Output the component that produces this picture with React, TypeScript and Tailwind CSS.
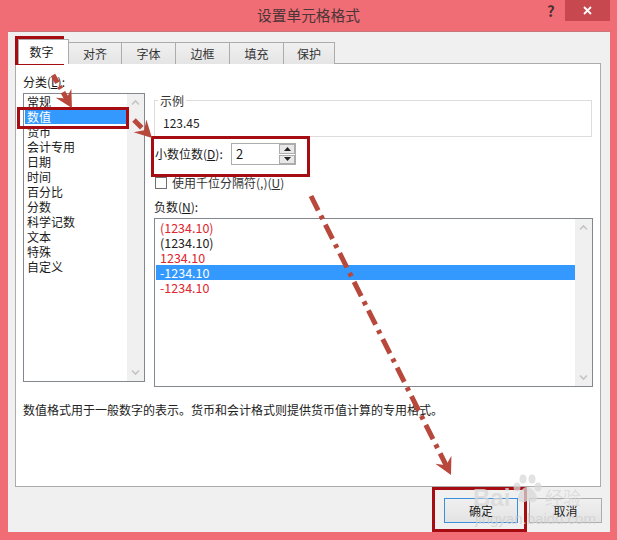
const font = { fontFamily: '"Noto Sans CJK SC", "Open Sans", sans-serif' };

const categories = ['常规', '数值', '货币', '会计专用', '日期', '时间', '百分比', '分数', '科学记数', '文本', '特殊', '自定义'];

const negatives = [
  { label: '(1234.10)', color: 'text-[#e0262e]' },
  { label: '(1234.10)', color: 'text-[#222222]' },
  { label: '1234.10', color: 'text-[#e0262e]' },
  { label: '-1234.10', color: 'text-white', selected: true },
  { label: '-1234.10', color: 'text-[#e0262e]' },
];

const tabs = [
  { label: '对齐', w: 'w-[54px]' },
  { label: '字体', w: 'w-[55px]' },
  { label: '边框', w: 'w-[55px]' },
  { label: '填充', w: 'w-[55px]' },
  { label: '保护', w: 'w-[52px]' },
];

function ScrollTrack() {
  return (
    <div className="w-[17px] shrink-0 bg-[#f0f0f0] flex flex-col justify-between items-center py-[5px]">
      <svg width="9" height="7" viewBox="0 0 9 7" fill="none" stroke="#c4c4c4" strokeWidth="1.6"><path d="M1 5.5 L4.5 2 L8 5.5" /></svg>
      <svg width="9" height="7" viewBox="0 0 9 7" fill="none" stroke="#c4c4c4" strokeWidth="1.6"><path d="M1 1.5 L4.5 5 L8 1.5" /></svg>
    </div>
  );
}

function Arrow({ x1, y1, x2, y2, dash }: { x1: number; y1: number; x2: number; y2: number; dash: string }) {
  const a = Math.atan2(y2 - y1, x2 - x1);
  const len = Math.hypot(x2 - x1, y2 - y1);
  const deg = (a * 180) / Math.PI;
  return (
    <g transform={`translate(${x1} ${y1}) rotate(${deg})`}>
      <line x1="0" y1="0" x2={len - 10} y2="0" stroke="#b8483c" strokeWidth="5" strokeDasharray={dash} />
      <path d={`M${len} 0 L${len - 17} -9 L${len - 11} 0 L${len - 17} 9 Z`} fill="#b8483c" />
    </g>
  );
}

export default function App() {
  return (
    <div className="relative w-[617px] h-[540px] overflow-hidden bg-[#f06d75] text-[12px] text-[#1a1a1a]" style={font}>
      {/* title bar */}
      <div className="relative h-[31px] flex items-center justify-center">
        <span className="text-[14.7px] leading-none text-[#4a3538] mt-[-1px]">设置单元格格式</span>
        <span className="absolute left-[547px] top-[2px] text-[15px] font-bold leading-[18px] text-[#4a2f33]">?</span>
        <div className="absolute left-[565px] top-0 w-[45px] h-[21px] bg-[#c7484f] flex items-center justify-center">
          <svg width="9" height="9" viewBox="0 0 9 9" stroke="#ffffff" strokeWidth="1.8"><path d="M1 1 L8 8 M8 1 L1 8" /></svg>
        </div>
      </div>

      {/* dialog body */}
      <div className="ml-[8px] w-[602px] h-[501px] bg-[#f0f0f0] border-t border-[#c9767b] pl-[7px] pr-[9px] pt-[9px] flex flex-col">
        <div className="flex h-[23px] items-end pl-[3px] relative z-10 shrink-0">
          <div className="w-[51px] h-[25px] bg-white border border-b-0 border-[#acacac] flex items-center justify-center pr-[4px]">数字</div>
          {tabs.map(t => (
            <div key={t.label} className={`${t.w} h-[22px] -ml-px first:ml-0 bg-gradient-to-b from-[#f0f0f0] to-[#e5e5e5] border border-b-0 border-[#acacac] flex items-center justify-center text-[#333333]`}>
              {t.label}
            </div>
          ))}
        </div>

        {/* panel */}
        <div className="w-[586px] h-[424px] bg-white border border-[#acacac] -mt-px pl-[7px] pt-[9px] flex flex-col shrink-0">
          <div className="flex gap-[9px]">
            <div className="w-[122px] shrink-0">
              <div className="h-[20px] leading-[18px]">分类(<span className="underline">L</span>):</div>
              <div className="h-[289px] border border-[#828790] flex bg-white">
                <div className="flex-1 pl-[1px]">
                  {categories.map(c => (
                    <div key={c} className={`h-[15px] leading-[15px] pl-[2px] ${c === '数值' ? 'bg-[#3399ff] text-white' : ''}`}>{c}</div>
                  ))}
                </div>
                <ScrollTrack />
              </div>
            </div>

            <div className="w-[439px] shrink-0 pt-[27px]">
              <div className="relative h-[37px] w-[438px] border border-[#dcdcdc] pl-[8px] pt-[13px] leading-[18px] text-[#222222]">
                <span className="absolute left-[3px] -top-[9px] bg-white px-[2px] leading-[17px] text-[#333333]">示例</span>
                123.45
              </div>
              <div className="flex items-center h-[22px] mt-[6px] pl-[1px]">
                <span className="w-[76px]">小数位数(<span className="underline">D</span>):</span>
                <div className="w-[65px] h-[22px] border border-[#acacac] flex items-center pl-[4px]">
                  <span className="flex-1 text-[13px]">2</span>
                  <div className="w-[16px] h-[20px] flex flex-col gap-px">
                    <div className="flex-1 flex items-center justify-center bg-[#e8e8e8] border border-[#acacac]"><svg width="7" height="4" viewBox="0 0 7 4" fill="#222222"><path d="M3.5 0 L7 4 L0 4 Z" /></svg></div>
                    <div className="flex-1 flex items-center justify-center bg-[#e8e8e8] border border-[#acacac]"><svg width="7" height="4" viewBox="0 0 7 4" fill="#222222"><path d="M0 0 L7 0 L3.5 4 Z" /></svg></div>
                  </div>
                </div>
              </div>
              <div className="flex items-center h-[14px] mt-[11px] pl-[1px]">
                <div className="w-[12px] h-[12px] border border-[#707070] bg-white mr-[5px]" />
                <span className="text-[#333333]">使用千位分隔符(,)(<span className="underline">U</span>)</span>
              </div>
              <div className="h-[18px] mt-[8px] leading-[18px]">负数(<span className="underline">N</span>):</div>
              <div className="h-[169px] w-[439px] mt-[2px] border border-[#828790] flex">
                <div className="flex-1 pt-[1px] pl-[1px]">
                  {negatives.map((n, i) => (
                    <div key={i} className={`h-[15px] leading-[15px] pl-[4px] text-[12.5px] ${n.color} ${n.selected ? 'bg-[#3399ff]' : ''}`}>{n.label}</div>
                  ))}
                </div>
                <ScrollTrack />
              </div>
            </div>
          </div>
          <div className="mt-[14px] leading-[18px] text-[#222222]">数值格式用于一般数字的表示。货币和会计格式则提供货币值计算的专用格式。</div>
        </div>

        {/* buttons */}
        <div className="flex justify-end gap-[11px] mt-[11px] shrink-0">
          <div className="w-[74px] h-[25px] border border-[#3c8fdc] bg-gradient-to-b from-[#f0f0f0] to-[#e3e3e3] flex items-center justify-center">确定</div>
          <div className="w-[73px] h-[25px] border border-[#acacac] bg-gradient-to-b from-[#f0f0f0] to-[#e3e3e3] flex items-center justify-center -mr-px">取消</div>
        </div>
      </div>

      {/* annotation boxes */}
      <div className="absolute left-[15px] top-[36px] w-[49px] h-[29px] border-[3px] border-[#a60d12]" />
      <div className="absolute left-[17px] top-[107px] w-[112px] h-[22px] border-[3px] border-[#a60d12]" />
      <div className="absolute left-[151px] top-[136px] w-[159px] h-[41px] border-[3px] border-[#a60d12]" />
      <div className="absolute left-[432px] top-[487px] w-[95px] h-[45px] border-[3px] border-[#a60d12]" />

      {/* annotation arrows */}
      <svg className="absolute left-0 top-0 pointer-events-none" width="617" height="540">
        <Arrow x1={53} y1={75} x2={72} y2={108} dash="9 4 3 4" />
        <Arrow x1={134} y1={120} x2={152} y2={138} dash="11 20" />
        <Arrow x1={311} y1={196} x2={451} y2={475} dash="16 6 4 6" />
      </svg>

      {/* watermark */}
      <svg className="absolute left-[511px] top-[473px]" width="32" height="32" viewBox="0 0 32 32" fill="#d8d8d8" fillOpacity="0.75">
        <ellipse cx="6" cy="14" rx="3.5" ry="4.5" />
        <ellipse cx="12" cy="6" rx="3.5" ry="4.5" />
        <ellipse cx="21" cy="6" rx="3.5" ry="4.5" />
        <ellipse cx="27" cy="14" rx="3.5" ry="4.5" />
        <path d="M16 14 C11 14 7 21 7 25 C7 30 13 30 16 28 C19 30 26 30 26 25 C26 21 21 14 16 14 Z" />
      </svg>
      <div className="absolute left-[473px] top-[486px] text-[#d8d8d8]/80 font-bold text-[24px] leading-none" style={{ fontFamily: '"Liberation Sans", sans-serif' }}>Bai</div>
      <div className="absolute left-[545px] top-[488px] text-[#d8d8d8]/80 text-[18px] leading-none">经验</div>
      <div className="absolute left-[475px] top-[511px] text-[#d0d0d0]/80 text-[15px] leading-none" style={{ fontFamily: '"Liberation Sans", sans-serif' }}>jingyan.baidu.com</div>
    </div>
  );
}
